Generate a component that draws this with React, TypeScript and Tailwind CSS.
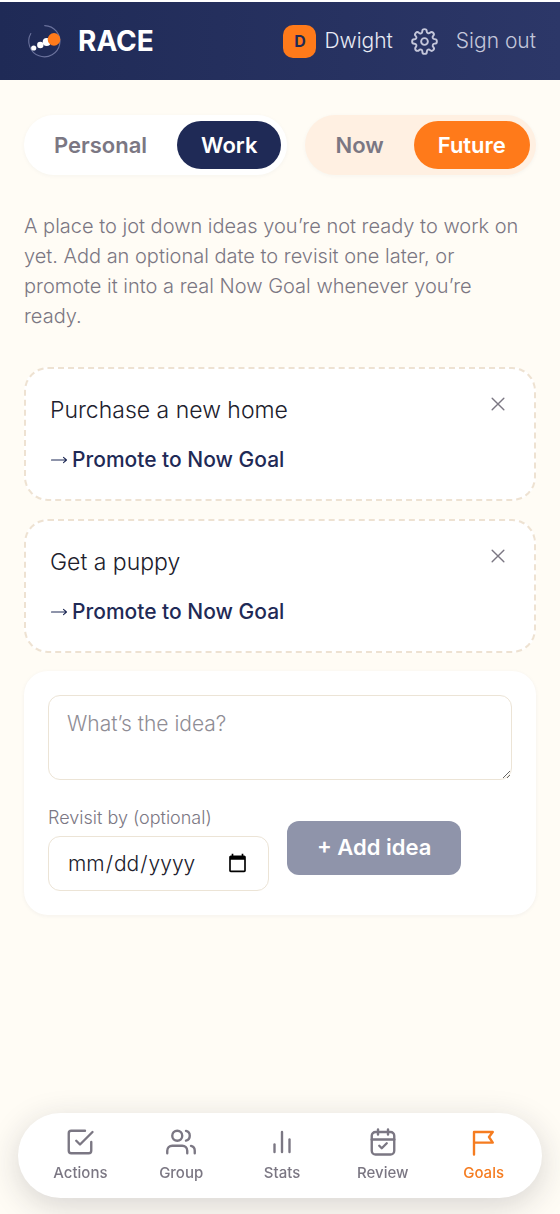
import { useState } from "react";
import type { ReactNode } from "react";

function Icon({ children, className, strokeWidth = 1.9 }: { children: ReactNode; className: string; strokeWidth?: number }) {
  return (
    <svg viewBox="0 0 24 24" fill="none" stroke="currentColor" strokeWidth={strokeWidth} strokeLinecap="round" strokeLinejoin="round" className={className} aria-hidden="true">
      {children}
    </svg>
  );
}

function Logo() {
  return (
    <svg viewBox="0 0 36 36" className="size-9" aria-hidden="true">
      <path d="M4.800 10.500A15.6 15.6 0 1 0 18.700 2.600" fill="none" stroke="#6a729c" strokeWidth="1.1" strokeLinecap="round" />
      <circle cx="7.700" cy="25" r="2.6" fill="#fff" />
      <circle cx="14.300" cy="22" r="3.2" fill="#fff" />
      <circle cx="20.700" cy="19" r="4" fill="#fff" />
      <circle cx="28" cy="16.400" r="6.3" fill="#ff7a1a" />
    </svg>
  );
}

const tabs: { label: string; icon: ReactNode }[] = [
  { label: "Actions", icon: <><path d="m9 11 3 3L22 4" /><path d="M21 12v7a2 2 0 0 1-2 2H5a2 2 0 0 1-2-2V5a2 2 0 0 1 2-2h11" /></> },
  { label: "Group", icon: <><path d="M17 21v-2a4 4 0 0 0-4-4H5a4 4 0 0 0-4 4v2" /><circle cx="9" cy="7" r="4" /><path d="M23 21v-2a4 4 0 0 0-3-3.87" /><path d="M16 3.13a4 4 0 0 1 0 7.75" /></> },
  { label: "Stats", icon: <><path d="M18 20V10" /><path d="M12 20V4" /><path d="M6 20v-6" /></> },
  { label: "Review", icon: <><rect x="3" y="4" width="18" height="18" rx="3" /><path d="M16 2v4" /><path d="M8 2v4" /><path d="M3 10h18" /><path d="m9 15 2 2 4-4" /></> },
  { label: "Goals", icon: <path d="M4 22V4h15l-3 4 3 4.500H4" /> },
];

function Toggle({ options, value, onChange, track, active }: { options: string[]; value: string; onChange: (v: string) => void; track: string; active: string }) {
  return (
    <div className={`flex gap-1.5 rounded-full p-1.5 shadow-[0_1px_4px_rgba(31,42,86,0.04)] ${track}`}>
      {options.map((o) => (
        <button key={o} type="button" onClick={() => onChange(o)} aria-pressed={o === value} className={`h-12 rounded-full px-6 text-[22px] font-semibold ${o === value ? active : "text-[#7b7783]"}`}>
          {o}
        </button>
      ))}
    </div>
  );
}

function IdeaCard({ title, onRemove }: { title: string; onRemove: () => void }) {
  return (
    <li className="flex items-start justify-between rounded-3xl border-2 border-dashed border-[#eee2d2] bg-white px-6 pt-[23px] pb-[21px]">
      <div>
        <h2 className="text-[23px] leading-9 font-light text-[#20202c]">{title}</h2>
        <button type="button" className="mt-3.5 flex items-center gap-1 text-[21px] leading-9 font-medium text-[#1f2a56]">
          <Icon className="size-[18px]" strokeWidth={1.5}><path d="M2 12h20M18 8.500l4 3.500-4 3.500" /></Icon>
          Promote to Now Goal
        </button>
      </div>
      <button type="button" aria-label={`Remove ${title}`} onClick={onRemove} className="p-0.5 text-[#7b7783]">
        <Icon className="size-5" strokeWidth={1.7}><path d="m5 5 14 14M19 5 5 19" /></Icon>
      </button>
    </li>
  );
}

export default function App() {
  const [area, setArea] = useState("Work");
  const [when, setWhen] = useState("Future");
  const [ideas, setIdeas] = useState(["Purchase a new home", "Get a puppy"]);
  const [idea, setIdea] = useState("");
  const [tab, setTab] = useState("Goals");

  return (
    <div className="min-h-screen bg-[#fffcf5] pb-32 font-['Inter','Liberation_Sans',sans-serif]">
      <header className="flex h-20 items-center justify-between border-t-2 border-white bg-linear-to-r from-[#1f2a56] to-[#2c3768] px-6">
        <div className="flex items-center gap-4 pl-0.5">
          <Logo />
          <span className="text-[28px] font-bold text-white">RACE</span>
        </div>
        <div className="flex items-center gap-[18px] text-[21px] font-light">
          <div className="flex items-center gap-2 text-[#e8eaf4]">
            <span className="flex size-[33px] items-center justify-center rounded-[10px] bg-[#ff7a1a] text-base font-bold text-[#1f2a56]">D</span>
            Dwight
          </div>
          <button type="button" aria-label="Settings" className="text-[#c3c6da]">
            <Icon className="size-[27px]" strokeWidth={1.7}>
              <circle cx="12" cy="12" r="3" />
              <path d="M19.4 15a1.65 1.65 0 0 0 .33 1.82l.06.06a2 2 0 0 1-2.83 2.83l-.06-.06a1.65 1.65 0 0 0-2.8 1.17V21a2 2 0 0 1-4 0v-.09A1.65 1.65 0 0 0 7.2 19.7l-.06.06a2 2 0 0 1-2.83-2.83l.06-.06a1.65 1.65 0 0 0-1.17-2.800H3a2 2 0 0 1 0-4h.09A1.65 1.65 0 0 0 4.3 7.200l-.06-.06a2 2 0 0 1 2.83-2.83l.06.06A1.65 1.65 0 0 0 10 3.200V3a2 2 0 0 1 4 0v.09a1.65 1.65 0 0 0 2.8 1.17l.06-.06a2 2 0 0 1 2.83 2.83l-.06.06a1.65 1.65 0 0 0 1.17 2.800H21a2 2 0 0 1 0 4h-.09a1.65 1.65 0 0 0-1.51 1.110z" />
            </Icon>
          </button>
          <button type="button" className="text-[#c3c6da]">Sign out</button>
        </div>
      </header>

      <main className="px-6 pt-[35px]">
        <div className="flex gap-[18px]">
          <Toggle options={["Personal", "Work"]} value={area} onChange={setArea} track="bg-white" active="bg-[#1f2a56] text-white" />
          <Toggle options={["Now", "Future"]} value={when} onChange={setWhen} track="bg-[#fff0e2]" active="bg-[#ff7a1a] text-white" />
        </div>

        <p className="mt-9 pr-2 text-[20px] leading-[30px] font-light text-[#7b7783]">
          A place to jot down ideas you’re not ready to work on yet. Add an optional date to revisit one later, or promote it into a real Now Goal whenever you’re ready.
        </p>

        <ul className="mt-9 flex flex-col gap-[18px]">
          {ideas.map((t) => (
            <IdeaCard key={t} title={t} onRemove={() => setIdeas(ideas.filter((i) => i !== t))} />
          ))}
        </ul>

        <form onSubmit={(e) => e.preventDefault()} className="mt-[18px] rounded-3xl bg-white p-6 shadow-[0_1px_4px_rgba(31,42,86,0.05)]">
          <textarea aria-label="Idea" value={idea} onChange={(e) => setIdea(e.target.value)} placeholder="What’s the idea?" className="block h-[85px] w-full rounded-xl border border-[#ece4d6] px-[18px] py-3 text-[21px] leading-8 font-light placeholder:text-[#8f8d95]" />
          <div className="mt-6 flex items-center gap-[18px]">
            <div>
              <label htmlFor="revisit" className="mb-1 block text-lg leading-7 font-light text-[#7b7783]">Revisit by (optional)</label>
              <input id="revisit" type="date" className="block h-[55px] w-[221px] rounded-xl border border-[#ece4d6] px-[18px] text-[21px] font-light text-[#20202c]" />
            </div>
            <button type="submit" className="h-[54px] rounded-xl bg-[#8f94aa] px-[30px] text-[22px] font-semibold text-white">+ Add idea</button>
          </div>
        </form>
      </main>

      <nav className="fixed inset-x-[18px] bottom-4 flex h-[85px] items-center justify-around rounded-full bg-white pr-2 pl-3 shadow-[0_8px_32px_rgba(31,31,50,0.18)]">
        {tabs.map((t) => (
          <button key={t.label} type="button" onClick={() => setTab(t.label)} className={`flex flex-1 flex-col items-center gap-1 text-[15px] leading-6 font-medium ${t.label === tab ? "text-[#f57c20]" : "text-[#7b7783]"}`}>
            <Icon className="size-[30px]">{t.icon}</Icon>
            {t.label}
          </button>
        ))}
      </nav>
    </div>
  );
}
